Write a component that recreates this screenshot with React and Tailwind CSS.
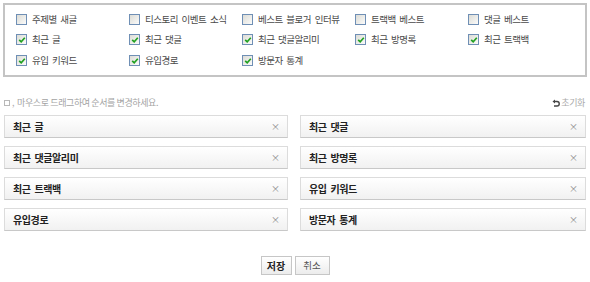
import React from "react";

const top = [
  ["주제별 새글", false],
  ["티스토리 이벤트 소식", false],
  ["베스트 블로거 인터뷰", false],
  ["트랙백 베스트", false],
  ["댓글 베스트", false],
  ["최근 글", true],
  ["최근 댓글", true],
  ["최근 댓글알리미", true],
  ["최근 방명록", true],
  ["최근 트랙백", true],
  ["유입 키워드", true],
  ["유입경로", true],
  ["방문자 통계", true],
];

const items = [
  "최근 글",
  "최근 댓글",
  "최근 댓글알리미",
  "최근 방명록",
  "최근 트랙백",
  "유입 키워드",
  "유입경로",
  "방문자 통계",
];

function Box({ checked }) {
  return (
    <span className="relative inline-block w-[11px] h-[11px] border border-[#6f8fb5] bg-gradient-to-br from-[#dcdcd6] to-[#fbfbfa] shrink-0">
      {checked && (
        <svg className="absolute left-[1px] top-[1px]" width="8" height="8" viewBox="0 0 8 8">
          <path d="M1.2 3.8 L3.2 5.8 L6.8 1.8" stroke="#21a121" strokeWidth="1.7" fill="none" />
        </svg>
      )}
    </span>
  );
}

export default function App() {
  return (
    <div
      className="w-[590px] h-[282px] bg-white text-[9px] leading-none"
      style={{ fontFamily: '"Noto Sans CJK KR", "Noto Sans", sans-serif' }}
    >
      <div className="pt-[3px] px-[3px]">
        <div className="h-[74px] border-2 border-[#c4c4c4] pl-[11px] pt-[4px] grid grid-cols-[113px_113px_113px_113px_113px] auto-rows-[20.5px]">
          {top.map(([label, c]) => (
            <div key={label} className="flex items-center gap-[5px] text-[#4a4a4a] text-[9.5px] tracking-[-0.5px] [word-spacing:2px]">
              <Box checked={c} />
              <span>{label}</span>
            </div>
          ))}
        </div>
      </div>

      <div className="mt-[21px] px-[4px] flex items-center justify-between text-[#a3a3a3] text-[9px] tracking-[-0.4px]">
        <div className="flex items-center gap-[2px]">
          <span className="inline-block w-[6px] h-[6px] border border-[#b8b8b8]" />
          <span className="text-[#b0b0b0] mr-[1px] -mt-[1px]">,</span>
          <span>마우스로 드래그하여 순서를 변경하세요.</span>
        </div>
        <div className="flex items-center gap-[1px] text-[#aaa] pr-[1px]">
          <svg width="8" height="8" viewBox="0 0 8 8">
            <path d="M2 2.5 H5 A2.2 2.2 0 0 1 5 7 H2" stroke="#444" strokeWidth="1.4" fill="none" />
            <path d="M0.5 2.5 L3 0.5 L3 4.5 Z" fill="#444" />
          </svg>
          <span>초기화</span>
        </div>
      </div>

      <div className="mt-[8px] ml-[4px] w-[582px] grid grid-cols-[284px_286px] gap-x-[12px] gap-y-[8px]">
        {items.map((it) => (
          <div
            key={it}
            className="h-[23px] border border-[#dcdcdc] border-b-[#c8c8c8] bg-gradient-to-b from-white to-[#f1f1f1] flex items-center justify-between pl-[8px] pr-[7px]"
          >
            <span className="font-bold text-[#222] text-[10px] tracking-[-0.4px] [word-spacing:2px]">{it}</span>
            <span className="text-[#888] text-[9px]">×</span>
          </div>
        ))}
      </div>

      <div className="mt-[25px] flex justify-center gap-[3px]">
        <button className="h-[19px] w-[31px] border border-[#c6c6c6] bg-gradient-to-b from-white to-[#ececec] text-[10px] font-bold text-[#222] leading-none">
          저장
        </button>
        <button className="h-[19px] w-[35px] border border-[#c6c6c6] bg-gradient-to-b from-white to-[#ececec] text-[9.5px] text-[#555] leading-none">
          취소
        </button>
      </div>
    </div>
  );
}
